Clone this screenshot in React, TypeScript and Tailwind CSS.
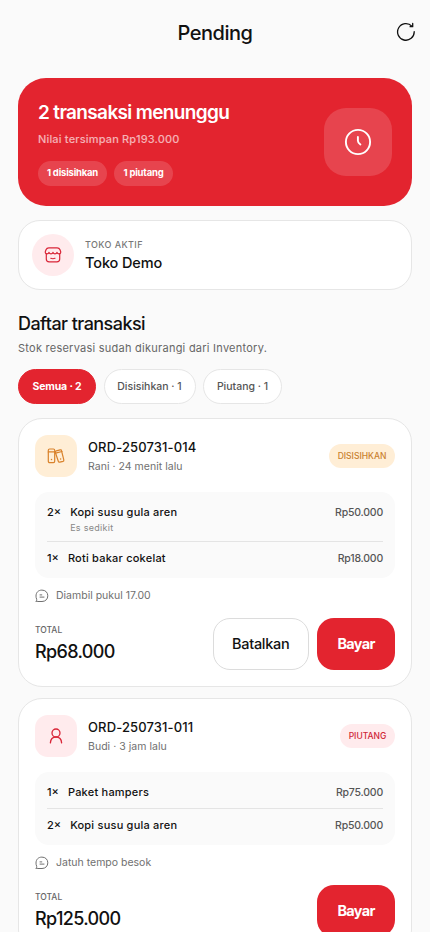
import { useState } from "react";

interface OrderItem {
  qty: number;
  name: string;
  price: string;
  note?: string;
}

interface Order {
  id: string;
  customer: string;
  status: "hold" | "debt";
  items: OrderItem[];
  note: string;
  total: string;
  canCancel: boolean;
}

const orders: Order[] = [
  {
    id: "ORD-250731-014",
    customer: "Rani · 24 menit lalu",
    status: "hold",
    items: [
      { qty: 2, name: "Kopi susu gula aren", price: "Rp50.000", note: "Es sedikit" },
      { qty: 1, name: "Roti bakar cokelat", price: "Rp18.000" },
    ],
    note: "Diambil pukul 17.00",
    total: "Rp68.000",
    canCancel: true,
  },
  {
    id: "ORD-250731-011",
    customer: "Budi · 3 jam lalu",
    status: "debt",
    items: [
      { qty: 1, name: "Paket hampers", price: "Rp75.000" },
      { qty: 2, name: "Kopi susu gula aren", price: "Rp50.000" },
    ],
    note: "Jatuh tempo besok",
    total: "Rp125.000",
    canCancel: false,
  },
];

const filters = [
  { key: "all", label: "Semua · 2", width: "w-[78px]" },
  { key: "hold", label: "Disisihkan · 1", width: "w-[92px]" },
  { key: "debt", label: "Piutang · 1", width: "w-[79px]" },
];

// Icons
const RefreshIcon = () => (
  <svg width="20" height="20" viewBox="0 0 20 20" fill="none" stroke="currentColor" strokeWidth="1.3" strokeLinecap="round" strokeLinejoin="round">
    <path d="M18.2 9.6A8.3 8.3 0 1 1 15.9 4.2" />
    <path d="M16.7 1.4v3.3h-2.6" />
  </svg>
);

const ClockIcon = () => (
  <svg width="28" height="28" viewBox="0 0 28 28" fill="none" stroke="currentColor" strokeWidth="1.9" strokeLinecap="round" strokeLinejoin="round">
    <circle cx="14" cy="14" r="12.1" />
    <path d="M13.9 9v3.8c0 1.4.9 2.6 2.5 3.7" />
  </svg>
);

const StoreIcon = () => (
  <svg width="18" height="18" viewBox="0 0 18 18" fill="none" stroke="currentColor" strokeWidth="1.2" strokeLinecap="round" strokeLinejoin="round">
    <path d="M2.3 7.6v5.4c0 2 .8 2.800 2.800 2.800h7.800c2 0 2.800-.8 2.800-2.800V7.600" />
    <path d="M4.8 1.8h8.4c1.5 0 2.300.7 2.800 2l.7 2c.2 1.200-.6 2.100-1.700 2.100-1 0-1.700-.6-2-1.500-.3.900-1 1.500-2 1.500s-1.700-.6-2-1.500c-.3.900-1 1.500-2 1.500s-1.700-.6-2-1.500c-.3.900-1 1.500-2 1.500-1.100 0-1.900-.9-1.700-2.100l.7-2c.5-1.300 1.300-2 2.800-2Z" />
    <path d="M6.8 12.3c1.200.5 3 .5 4.200 0" />
  </svg>
);

const BinderIcon = () => (
  <svg width="18" height="18" viewBox="0 0 18 18" fill="none" stroke="currentColor" strokeWidth="1.2" strokeLinecap="round" strokeLinejoin="round">
    <rect x="1.3" y="2" width="6.4" height="13.6" rx="1.3" />
    <path d="M1.3 4.9h6.4" />
    <path d="m9.3 3.8 3.8-1c.7-.2 1.2.1 1.400.8l2.300 9.200c.2.8-.1 1.300-.8 1.500l-3.200.8c-.7.2-1.300-.1-1.500-.8L8.300 5.300c-.2-.8.200-1.300 1-1.500Z" />
    <path d="m8.5 6.2 6.5-1.7" />
    <path d="M4.5 12.500v.1M13.600 12v.1" strokeWidth="1.5" />
  </svg>
);

const UserIcon = () => (
  <svg width="18" height="18" viewBox="0 0 18 18" fill="none" stroke="currentColor" strokeWidth="1.3" strokeLinecap="round" strokeLinejoin="round">
    <circle cx="9" cy="6" r="4" />
    <path d="M3.4 15.9c.2-3.400 2.300-5.900 5.600-5.900s5.400 2.500 5.600 5.900" />
  </svg>
);

const NoteIcon = () => (
  <svg width="14" height="14" viewBox="0 0 14 14" fill="none" stroke="currentColor" strokeWidth="1" strokeLinecap="round" strokeLinejoin="round">
    <path d="M1.3 12.200c.6-.7.500-1.300.3-2.200C1.200 9.100 1 8.200 1 7.100 1 3.500 3.300 1.100 6.900 1.100s5.900 2.400 5.900 5.700-2.300 5.700-5.800 5.700H2.200c-.7 0-1 0-.9-.3Z" />
    <path d="M5 5.900h1.800M5 8.100h4" />
  </svg>
);

const OrderCard = ({ order }: { order: Order }) => {
  const hold = order.status === "hold";

  return (
    <div className="rounded-[24px] border border-[#e6e6e6] bg-white p-4">
      <div className="flex items-center">
        <div
          className={`flex size-[42px] shrink-0 items-center justify-center rounded-[13px] ${
            hold ? "bg-[#ffeed6] text-[#d9822b]" : "bg-[#ffebed] text-[#d92638]"
          }`}
        >
          {hold ? <BinderIcon /> : <UserIcon />}
        </div>
        <div className="ml-[11px] flex-1">
          <h3 className="text-[13px] leading-[18px] font-medium tracking-[0.12px]">{order.id}</h3>
          <p className="mt-[2px] text-[10.5px] leading-[17px] tracking-[0.03px] text-[#707070]">{order.customer}</p>
        </div>
        <span
          className={`flex h-6 items-center justify-center rounded-full text-[8.5px] font-medium ${
            hold ? "w-[66px] bg-[#ffeed6] text-[#c9812f]" : "w-[55px] bg-[#ffebed] text-[#cf2637]"
          }`}
        >
          {hold ? "DISISIHKAN" : "PIUTANG"}
        </span>
      </div>

      <div className="mt-[15px] divide-y divide-[#e4e4e4] rounded-[14px] bg-[#fafafa] px-3 py-1">
        {order.items.map((item) => (
          <div key={item.name} className="flex items-start pt-2 pb-[7px] text-[11px] leading-[17px]">
            <span className="font-medium">{item.qty}×</span>
            <div className="ml-[9px] flex-1">
              <p className="font-medium tracking-[0.22px]">{item.name}</p>
              {item.note && <p className="text-[9px] leading-[13px] tracking-[0.3px] text-[#888]">{item.note}</p>}
            </div>
            <span className="text-[10.5px] font-medium tracking-[-0.2px] text-[#555]">{item.price}</span>
          </div>
        ))}
      </div>

      <div className="mt-[11px] flex h-[14px] items-center gap-[7px] text-[10.5px] text-[#707070]">
        <NoteIcon />
        <span>{order.note}</span>
      </div>

      <div className="mt-[15px] flex items-center">
        <div className="flex-1">
          <p className="text-[8.5px] leading-[14px] font-medium text-[#666]">TOTAL</p>
          <p className="mt-[2px] text-[18px] leading-[26px] font-medium tracking-[-0.65px]">{order.total}</p>
        </div>
        {order.canCancel && (
          <button className="h-[52px] w-[96.5px] rounded-[17px] border border-[#dcdcdc] text-[14.5px] font-medium tracking-[-0.3px]">
            Batalkan
          </button>
        )}
        <button className="ml-2 h-[52px] w-[78px] rounded-[17px] bg-[#e3242f] text-[14.5px] font-bold tracking-[-0.7px] text-white">
          Bayar
        </button>
      </div>
    </div>
  );
};

export default function App() {
  const [active, setActive] = useState("all");
  const visible = orders.filter((order) => active === "all" || order.status === active);

  return (
    <div className="h-screen overflow-hidden bg-[#fafafa] px-[18px] font-[Inter,sans-serif] text-[#111]">
      {/* Header */}
      <header className="grid h-[66px] grid-cols-[1fr_auto_1fr] items-center">
        <h1 className="col-start-2 text-[20px] font-medium tracking-[-0.5px]">Pending</h1>
        <button className="-mr-1 -mt-[2px] justify-self-end">
          <RefreshIcon />
        </button>
      </header>

      {/* Summary */}
      <section className="mt-3 flex h-32 items-center justify-between rounded-[28px] bg-[#e3242f] px-5 text-white">
        <div className="pt-[2px]">
          <h2 className="text-[19px] leading-[26px] font-semibold tracking-[-0.65px]">2 transaksi menunggu</h2>
          <p className="mt-[5px] text-[11px] leading-4 font-medium tracking-[0.17px] text-white/65">Nilai tersimpan Rp193.000</p>
          <div className="mt-[14px] flex gap-[7px] text-[9.5px] font-bold tracking-[-0.2px]">
            <span className="flex h-[25px] w-[69px] items-center justify-center rounded-full bg-white/15">1 disisihkan</span>
            <span className="flex h-[25px] w-[59px] items-center justify-center rounded-full bg-white/15">1 piutang</span>
          </div>
        </div>
        <div className="flex size-[68px] items-center justify-center rounded-[22px] bg-white/15">
          <ClockIcon />
        </div>
      </section>

      {/* Active store */}
      <section className="mt-[14px] flex h-[70px] items-center rounded-[22px] border border-[#e6e6e6] bg-white px-[13px]">
        <div className="flex size-[42px] items-center justify-center rounded-full bg-[#ffebed] text-[#d92638]">
          <StoreIcon />
        </div>
        <div className="ml-[11px]">
          <p className="text-[9px] leading-[14px] font-medium tracking-[0.4px] text-[#777]">TOKO AKTIF</p>
          <p className="text-[14.5px] leading-[21px] font-medium tracking-[-0.1px]">Toko Demo</p>
        </div>
      </section>

      {/* Transactions */}
      <h2 className="mt-[22px] text-[18px] leading-6 font-medium tracking-[-0.55px]">Daftar transaksi</h2>
      <p className="mt-1 text-[11px] leading-4 tracking-[0.25px] text-[#666]">Stok reservasi sudah dikurangi dari Inventory.</p>
      <div className="mt-[13px] flex gap-[7.5px]">
        {filters.map((filter) => (
          <button
            key={filter.key}
            onClick={() => setActive(filter.key)}
            className={`h-[35px] rounded-full border text-[10.5px] ${filter.width} ${
              active === filter.key
                ? "border-[#e3242f] bg-[#e3242f] font-bold tracking-[-0.15px] text-white"
                : "border-[#e6e6e6] bg-white font-medium text-[#555]"
            }`}
          >
            {filter.label}
          </button>
        ))}
      </div>

      <div className="mt-[14px] flex flex-col gap-[11px]">
        {visible.map((order) => (
          <OrderCard key={order.id} order={order} />
        ))}
      </div>
    </div>
  );
}
